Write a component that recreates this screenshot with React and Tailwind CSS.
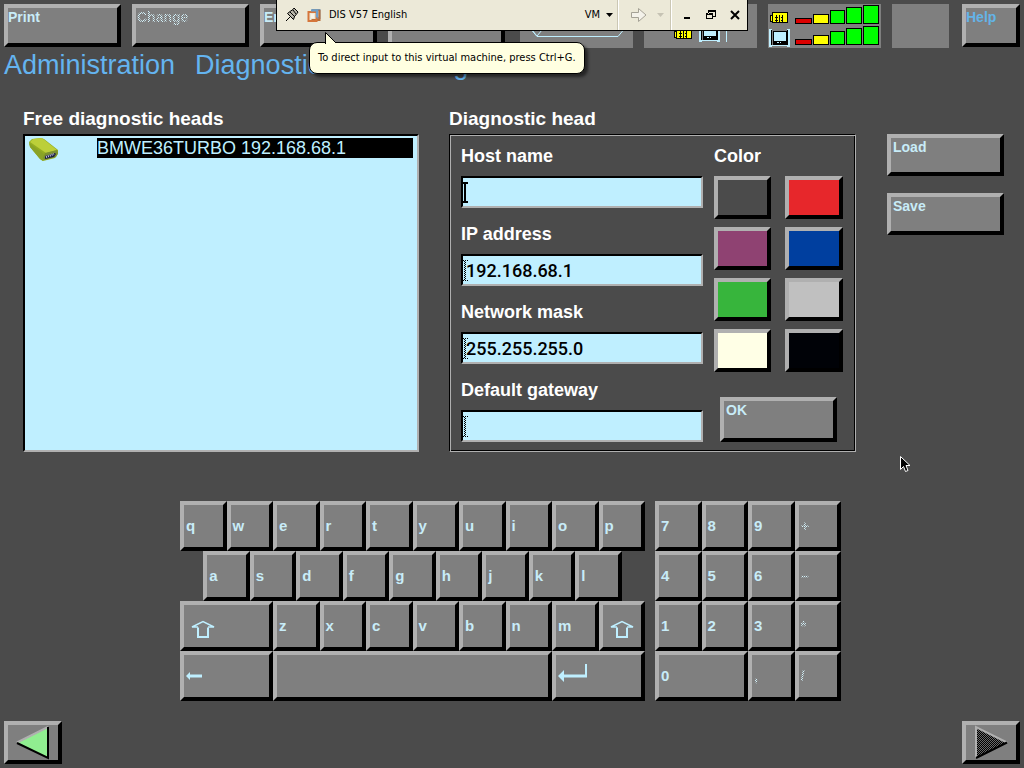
import React from "react";

const BEVEL =
  "border-4 border-t-[#b0b0b0] border-l-[#b0b0b0] border-r-black border-b-black";
const DITHER_TEXT =
  "bg-[repeating-conic-gradient(#d4f2fb_0_25%,transparent_0_50%)] bg-[length:2px_2px] bg-clip-text text-transparent";

function PanelButton({ children, className = "", textClass = "text-[#c8ecf8]", ...rest }) {
  return (
    <button
      type="button"
      className={`flex items-start bg-[#7f7f7f] pt-px text-left text-sm leading-4 font-bold ${BEVEL} ${className}`}
      {...rest}
    >
      <span className={textClass}>{children}</span>
    </button>
  );
}

function Connector() {
  return (
    <g shapeRendering="crispEdges">
      <rect x="0" y="3" width="3" height="6" fill="#ff0" stroke="#000" />
      <rect x="2" y="0" width="15" height="10" fill="#ff0" stroke="#000" />
      <path d="M5.5 2v7M8.5 2v7M11.5 2v7" stroke="#000" />
      <path d="M4 4.5h8M4 7.5h8" stroke="#000" strokeDasharray="1 1" />
    </g>
  );
}

function Laptop() {
  return (
    <g shapeRendering="crispEdges">
      <path d="M0 .5h3M1 0v17M0 16.5h3M18 .5h3M20 0v17M18 16.5h3" stroke="#bfefff" strokeWidth="2" />
      <path d="M2.5 1v15M18.5 1v15" stroke="#000" />
      <rect x="4" y="2" width="13" height="13" fill="#bfefff" stroke="#000" />
      <rect x="4" y="12" width="13" height="3" fill="#000" />
      <path d="M8 13.5h2M11 13.5h1" stroke="#bfefff" />
      <path d="M2 16.5h17" stroke="#bfefff" />
    </g>
  );
}

function Bars() {
  const bars = [
    [27.5, 5, 16, "#dc0000"],
    [45.5, 9, 15, "#ff0"],
    [62.5, 13, 14, "#0f0"],
    [78.5, 16, 15, "#0f0"],
    [95.5, 18, 15, "#0f0"],
  ];
  return bars.map(([x, h, w, fill]) => (
    <rect key={x} x={x} y={19.5 - h} width={w} height={h} fill={fill} stroke="#000" />
  ));
}

function TopBar() {
  return (
    <div className="flex items-start px-1 pt-1">
      <div className="flex gap-[11px]">
        <PanelButton className="h-[43px] w-[117px]">Print</PanelButton>
        <PanelButton className="h-[43px] w-[117px] pl-px" textClass={DITHER_TEXT} disabled>
          Change
        </PanelButton>
        <PanelButton className="h-[43px] w-[117px]">End</PanelButton>
        <PanelButton className="h-[43px] w-[117px]" aria-label="Function 4" />
      </div>
      <div className="ml-[15px] flex gap-[11px]">
        <div className="h-11 w-[113px] bg-[#7f7f7f]">
          <svg width="113" height="44" fill="none" stroke="#bfefff">
            <path d="M17 32.5h81l5-6v-12l-5-6H17l-5 6v12zM12 26l5 6 5-6" />
          </svg>
        </div>
        <div className="h-11 w-[113px] bg-[#7f7f7f]">
          <svg width="113" height="44">
            <g transform="translate(30.5 24.5)"><Connector /></g>
            <g transform="translate(55 20)"><Laptop /></g>
            <path d="M82.5 8v30" stroke="#bfefff" />
          </svg>
        </div>
        <div className="h-11 w-[113px] bg-[#7f7f7f]">
          <svg width="113" height="44">
            <g transform="translate(2.5 8.5)"><Connector /></g>
            <g transform="translate(1 25)"><Laptop /></g>
            <Bars />
            <g transform="translate(0 21)"><Bars /></g>
          </svg>
        </div>
        <div className="h-11 w-[57px] bg-[#7f7f7f]" />
      </div>
      <PanelButton className="ml-auto h-[43px] w-[58px]" textClass="text-[#64b4e8]">
        Help
      </PanelButton>
    </div>
  );
}

function VmToolbar() {
  return (
    <div className="absolute top-0 left-1/2 w-[472px] -translate-x-1/2 font-['DejaVu_Sans_Condensed','DejaVu_Sans',sans-serif] text-[11px] text-black">
      <div className="flex h-[31px] items-center border-x border-b border-black bg-[#ece9d8] pl-2">
        <svg width="14" height="16" viewBox="0 0 14 16" fill="#b8b5a8" stroke="#000">
          <path d="M1 14l4-4" fill="none" />
          <path d="M2.5 6.5l6 6 1-3 2.5-3 1-1.5-4-4-1 1.5-3 2z" />
          <path d="M5 5l5 5M8 3l3 4" fill="none" />
        </svg>
        <svg className="ml-2" width="14" height="15" viewBox="0 0 14 15" fill="none">
          <path d="M4.5 2h8v8h-3" stroke="#7d93a8" strokeWidth="2" />
          <path d="M12.5 2v10h-8" stroke="#b96f38" strokeWidth="2" />
          <rect x="1.5" y="4" width="8" height="9" stroke="#d5763b" strokeWidth="2" />
          <path d="M4 2.5h6v7" stroke="#6d9fc8" strokeWidth="2" />
          <rect x="4" y="6" width="3" height="4" fill="#f8f4e8" />
        </svg>
        <span className="ml-2">DIS V57 English</span>
        <button type="button" className="ml-auto flex items-center gap-[6px] pr-1">
          VM
          <svg width="7" height="4"><path d="M0 0h7L3.5 4z" fill="#000" /></svg>
        </button>
        <span className="h-[30px] w-0.5 border-l border-[#cbc7b4] bg-white" />
        <button type="button" aria-label="Send" disabled className="flex items-center gap-2.5 pr-1.5 pl-3">
          <svg width="16" height="14" viewBox="0 0 16 14">
            <path d="M.5 4.5h7v-4L15 7l-7.5 6.5v-4h-7z" fill="#f4f2ea" stroke="#a5a296" />
          </svg>
          <svg width="7" height="4"><path d="M0 0h7L3.5 4z" fill="#c6c3b4" /></svg>
        </button>
        <span className="h-[30px] w-0.5 border-l border-[#cbc7b4] bg-white" />
        <div className="ml-[3px] flex">
          <button type="button" aria-label="Minimize" className="flex w-6 justify-center">
            <svg width="10" height="10"><path d="M2 7h6v2H2z" /></svg>
          </button>
          <button type="button" aria-label="Restore" className="flex w-6 justify-center">
            <svg width="10" height="10" shapeRendering="crispEdges">
              <path d="M2 0h8v7H7V6h2V2H3v2H2zM0 3h7v6H0zM1 5v3h5V5z" fillRule="evenodd" />
            </svg>
          </button>
          <button type="button" aria-label="Close" className="flex w-6 justify-center">
            <svg width="10" height="10"><path d="M1 1l8 8M9 1L1 9" stroke="#000" strokeWidth="2" /></svg>
          </button>
        </div>
      </div>
      <div role="tooltip" className="absolute top-[42px] left-[33px] rounded-lg border border-black bg-[#ffffe1] px-2 py-[7px] leading-4 whitespace-nowrap shadow-[3px_3px_3px_rgba(0,0,0,0.5)]">
        To direct input to this virtual machine, press Ctrl+G.
        <svg className="absolute -top-[11px] left-[14px]" width="14" height="12">
          <path d="M1.5 12V.5L12 11" fill="#ffffe1" stroke="#000" />
        </svg>
      </div>
    </div>
  );
}

function HeadIcon() {
  return (
    <svg width="32" height="24" viewBox="0 0 32 24">
      <path d="M1 4L4 1l9-1 3 1 14 11v4l-3 4-12 3-3-2L2 9z" fill="#93ad22" />
      <path d="M2 4l3-3 9-1 15 12-11 3z" fill="#bccf39" />
      <path d="M1 5l15 11-1 7-3-2L2 9z" fill="#8aa326" />
      <path d="M17 15l12-3 1 3-2 4-12 3-1-2z" fill="#7b9030" />
      <path d="M17 18l10-3 1 1-2 3-9 2z" fill="#1d2040" />
      <path d="M18 19l8-3" stroke="#c9c9e8" strokeWidth="2" strokeDasharray="1 1" />
    </svg>
  );
}

function Field({ id, label, value, active }) {
  return (
    <div>
      <label htmlFor={id} className="block h-[41px] pt-px text-lg leading-10 font-bold text-white">
        {label}
      </label>
      <div className="relative">
        <input
          id={id}
          type="text"
          defaultValue={value}
          className="block h-8 w-full border-2 border-t-black border-r-[#b0b0b0] border-b-[#b0b0b0] border-l-black bg-[#bfefff] pl-[3px] font-[Roboto,sans-serif] text-lg font-medium text-black outline-none"
        />
        <svg className="pointer-events-none absolute top-1.5 left-0.5" width="5" height="21" shapeRendering="crispEdges">
          <path
            d={active ? "M0 0h5v2H3v17h2v2H0v-2h1V2H0z" : "M0 0h5v1H3v19h2v1H0v-1h1V1H0z"}
            fill={active ? "#000" : "url(#dither)"}
          />
        </svg>
      </div>
    </div>
  );
}

const COLORS = [
  ["Dark gray", "bg-[#4b4b4b]"],
  ["Red", "bg-[#e7272b]"],
  ["Purple", "bg-[#8f4272]"],
  ["Blue", "bg-[#003f9f]"],
  ["Green", "bg-[#37b53c]"],
  ["Light gray", "bg-[#c0c0c0]"],
  ["Ivory", "bg-[#ffffe6]"],
  ["Black", "bg-[#000207]"],
];

function Configuration() {
  return (
    <main className="mt-[22px] grid grid-cols-[396fr_407fr_118px] gap-x-[30px] pr-5 pl-[23px]">
      <section>
        <h2 className="h-[30px] text-[19px] leading-[30px] font-bold text-white">Free diagnostic heads</h2>
        <ul className="h-[318px] border-2 border-t-black border-r-[#b0b0b0] border-b-[#b0b0b0] border-l-black bg-[#bfefff] pt-0.5 pr-1 pl-[3px]">
          <li className="flex">
            <HeadIcon />
            <span className="ml-[37px] h-5 flex-1 bg-black text-lg leading-5 text-[#bfefff]">
              BMWE36TURBO 192.168.68.1
            </span>
          </li>
        </ul>
      </section>
      <section>
        <h2 className="h-[30px] text-[19px] leading-[30px] font-bold text-white">Diagnostic head</h2>
        <form className="flex h-[318px] gap-[11px] border border-t-black border-r-[#b0b0b0] border-b-[#b0b0b0] border-l-black pr-3 pl-[11px] shadow-[inset_1px_1px_0_#b0b0b0,inset_-1px_-1px_0_#000]">
          <div className="flex flex-1 flex-col gap-[5px]">
            <Field id="host" label="Host name" value="" active />
            <Field id="ip" label="IP address" value="192.168.68.1" />
            <Field id="mask" label="Network mask" value="255.255.255.0" />
            <Field id="gateway" label="Default gateway" value="" />
          </div>
          <div className="w-[129px]">
            <h3 className="h-[41px] pt-px text-lg leading-10 font-bold text-white">Color</h3>
            <div className="grid grid-cols-[57fr_58fr] gap-x-[14px] gap-y-2">
              {COLORS.map(([name, fill]) => (
                <button key={name} type="button" aria-label={name} className={`h-[43px] ${BEVEL} ${fill}`} />
              ))}
            </div>
            <PanelButton className="mt-[25px] ml-1.5 h-[45px] w-[117px] pl-0.5">OK</PanelButton>
          </div>
        </form>
      </section>
      <div className="flex flex-col gap-[17px] pt-[30px] pl-px">
        <PanelButton className="h-[42px] pl-0.5">Load</PanelButton>
        <PanelButton className="h-[42px] pl-0.5">Save</PanelButton>
      </div>
    </main>
  );
}

function Key({ children, className = "col-span-2", label, dim }) {
  return (
    <button
      type="button"
      aria-label={label}
      disabled={dim}
      className={`flex h-[50px] items-center bg-[#7f7f7f] pl-0.5 text-[15px] leading-4 font-bold text-[#c8ecf8] ${BEVEL} ${className}`}
    >
      {dim ? <span className={DITHER_TEXT}>{children}</span> : children}
    </button>
  );
}

function ShiftArrow() {
  return (
    <svg className="mt-1.5 ml-1" width="26" height="18" fill="none" stroke="#bfefff">
      <path d="M8 7.5V17h10V7.5" strokeWidth="2" />
      <path d="M8 7H2L13 1.5 24 7h-6" strokeWidth="1.500" />
    </svg>
  );
}

function Keyboard() {
  return (
    <div className="mt-[49px] flex justify-center gap-2.5 pr-[3px]">
      <div className="grid w-[465px] grid-cols-20">
        {[..."qwertyuiop"].map((k) => <Key key={k}>{k}</Key>)}
        {[..."asdfghjkl"].map((k) => (
          <Key key={k} className={k === "a" ? "col-span-2 col-start-2" : "col-span-2"}>{k}</Key>
        ))}
        <Key className="col-span-4 col-start-1" label="Shift"><ShiftArrow /></Key>
        {[..."zxcvbnm"].map((k) => <Key key={k}>{k}</Key>)}
        <Key label="Right shift"><ShiftArrow /></Key>
        <Key className="col-span-4" label="Backspace">
          <svg width="17" height="8" fill="#bfefff"><path d="M0 4l4-4v2.500h12v3H4V8z" /></svg>
        </Key>
        <Key className="col-span-12" label="Space" />
        <Key className="col-span-4" label="Enter">
          <svg className="-mt-1.5" width="30" height="20" fill="#bfefff">
            <path d="M0 13l6-6v4.500h21V1h2v13.500H6V19z" />
          </svg>
        </Key>
      </div>
      <div className="grid w-[186px] grid-cols-8">
        {["7", "8", "9"].map((k) => <Key key={k}>{k}</Key>)}
        <Key dim>+</Key>
        {["4", "5", "6"].map((k) => <Key key={k}>{k}</Key>)}
        <Key dim>–</Key>
        {["1", "2", "3"].map((k) => <Key key={k}>{k}</Key>)}
        <Key dim>*</Key>
        <Key className="col-span-4">0</Key>
        <Key dim>,</Key>
        <Key dim>/</Key>
      </div>
    </div>
  );
}

function Navigation() {
  return (
    <nav className="mt-auto flex justify-between px-1 pb-1">
      <button type="button" aria-label="Back" className={`h-[43px] w-[58px] bg-[#7f7f7f] ${BEVEL}`}>
        <svg width="50" height="35">
          <path d="M10 17.5L39 3v30z" fill="#90ee90" />
          <path d="M9 17.5L40 2" stroke="#b0b0b0" strokeWidth="2" />
          <path d="M9 18l31 15V2" fill="none" stroke="#000" strokeWidth="2" />
        </svg>
      </button>
      <button type="button" aria-label="Forward" disabled className={`h-[43px] w-[58px] bg-[#7f7f7f] ${BEVEL}`}>
        <svg width="50" height="35">
          <path d="M10 2v31l31-15z" fill="#6a6a6a" />
          <path d="M10 2v31l31-15z" fill="url(#dither)" />
          <path d="M10 33V2l31 15.5" fill="none" stroke="#b0b0b0" strokeWidth="2" />
          <path d="M10 33l31-15.5" stroke="#000" strokeWidth="2" />
        </svg>
      </button>
    </nav>
  );
}

export default function App() {
  return (
    <div className="relative flex min-h-screen flex-col bg-[#4b4b4b] font-['Liberation_Sans',Arial,sans-serif]">
      <svg className="absolute" width="0" height="0">
        <pattern id="dither" width="2" height="2" patternUnits="userSpaceOnUse">
          <path d="M0 0h1v1H0zM1 1h1v1H1z" />
        </pattern>
      </svg>
      <TopBar />
      <h1 className="flex h-[34px] gap-5 pl-1 text-[27px] leading-[34px] text-[#64b4f0]">
        <span>Administration</span>
        <span>Diagnostic head configuration</span>
      </h1>
      <Configuration />
      <Keyboard />
      <Navigation />
      <VmToolbar />
      <svg className="pointer-events-none absolute top-[456px] left-[900px]" width="12" height="18">
        <path d="M.5.5v13l3-3 2 5 2.500-1-2-5h4z" fill="#000" stroke="#fff" />
      </svg>
    </div>
  );
}
